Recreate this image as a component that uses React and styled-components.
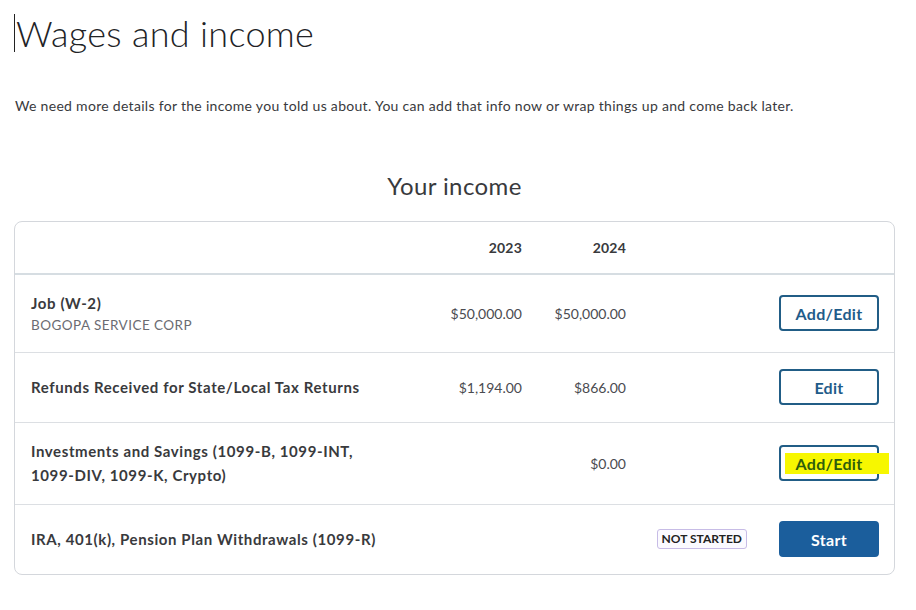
import React from 'react'
import styled, { createGlobalStyle } from 'styled-components'

const GlobalStyle = createGlobalStyle`
  html, body {
    margin: 0;
    padding: 0;
    background: #fff;
  }
  body {
    font-family: Lato, "Noto Sans", "Liberation Sans", sans-serif;
    color: #393a3d;
  }
`

const rows = [
  { title: 'Job (W-2)', sub: 'BOGOPA SERVICE CORP', y2023: '$50,000.00', y2024: '$50,000.00', action: 'Add/Edit' },
  { title: 'Refunds Received for State/Local Tax Returns', y2023: '$1,194.00', y2024: '$866.00', action: 'Edit' },
  {
    title: 'Investments and Savings (1099-B, 1099-INT, 1099-DIV, 1099-K, Crypto)',
    y2024: '$0.00',
    action: 'Add/Edit',
    highlight: true,
  },
  { title: 'IRA, 401(k), Pension Plan Withdrawals (1099-R)', status: 'NOT STARTED', action: 'Start', primary: true },
]

// keep form codes like "1099-DIV" on one line
function Words({ text }) {
  const words = text.split(' ')
  return words.map((w, i) => (
    <React.Fragment key={i}>
      <Word>{w}</Word>
      {i < words.length - 1 ? ' ' : null}
    </React.Fragment>
  ))
}

export default function App() {
  return (
    <Page>
      <GlobalStyle />
      <Title>Wages and income</Title>
      <Intro>
        We need more details for the income you told us about. You can add that info now or wrap things up and come
        back later.
      </Intro>
      <SectionTitle>Your income</SectionTitle>
      <Card>
        <HeaderRow>
          <span />
          <YearHead>2023</YearHead>
          <YearHead>2024</YearHead>
          <span />
          <span />
        </HeaderRow>
        {rows.map((row) => (
          <Row key={row.title}>
            <Label>
              <LabelTitle>
                <Words text={row.title} />
              </LabelTitle>
              {row.sub && <LabelSub>{row.sub}</LabelSub>}
            </Label>
            <Amount>{row.y2023}</Amount>
            <Amount>{row.y2024}</Amount>
            <Status>{row.status && <Badge>{row.status}</Badge>}</Status>
            <ActionButton $primary={row.primary}>
              {row.highlight ? <Marker>{row.action}</Marker> : row.action}
            </ActionButton>
          </Row>
        ))}
      </Card>
    </Page>
  )
}

const Page = styled.div`
  padding: 14px 21px 36px 14px;
`

const Title = styled.h1`
  margin: 0;
  padding-left: 1px;
  border-left: 1px solid #222;
  height: 38px;
  font-size: 36px;
  font-weight: 300;
  line-height: 38px;
  letter-spacing: 0.3px;
  color: #222326;
`

const Intro = styled.p`
  margin: 44px 0 0 1px;
  font-size: 14px;
  line-height: 20px;
  letter-spacing: 0.3px;
  color: #393a3d;
`

const SectionTitle = styled.h2`
  margin: 56px 0 0;
  text-align: center;
  font-size: 24px;
  font-weight: 400;
  line-height: 28px;
  letter-spacing: 0.4px;
  color: #393a3d;
`

const Card = styled.div`
  margin-top: 21px;
  border: 1px solid #d4d7dc;
  border-radius: 8px;
  overflow: hidden;
`

const grid = `
  display: grid;
  grid-template-columns: 1fr 120px 104px 121px 32px 100px;
  align-items: center;
  padding: 0 15px 0 16px;
`

const HeaderRow = styled.div`
  ${grid}
  height: 51px;
  border-bottom: 2px solid #d6dde2;
`

const YearHead = styled.span`
  text-align: right;
  font-size: 14px;
  font-weight: 700;
  letter-spacing: 0.2px;
  color: #393a3d;
`

const Row = styled.div`
  ${grid}
  padding-top: 16px;
  padding-bottom: 17px;
  border-bottom: 1px solid #dcdfe3;
  &:last-child {
    border-bottom: none;
  }
`

const Label = styled.div`
  min-width: 0;
`

const LabelTitle = styled.div`
  font-size: 15px;
  font-weight: 700;
  line-height: 24px;
  letter-spacing: 0.6px;
  color: #393a3d;
`

const Word = styled.span`
  white-space: nowrap;
`

const LabelSub = styled.div`
  font-size: 13.5px;
  line-height: 20px;
  letter-spacing: 0.45px;
  color: #6b6c72;
`

const Amount = styled.span`
  text-align: right;
  font-size: 14px;
  color: #4a4b50;
`

const Status = styled.div`
  display: flex;
  justify-content: flex-end;
`

const Badge = styled.span`
  border: 1px solid #c7bce6;
  background: #fbfaff;
  border-radius: 3px;
  padding: 1px 4px;
  font-size: 12px;
  font-weight: 700;
  line-height: 16px;
  color: #222;
`

const ActionButton = styled.button`
  grid-column: 6;
  height: 36px;
  width: 100px;
  box-sizing: border-box;
  border: 2px solid ${(p) => (p.$primary ? '#1b5e9c' : '#215d86')};
  border-radius: 4px;
  background: ${(p) => (p.$primary ? '#1b5e9c' : '#fff')};
  color: ${(p) => (p.$primary ? '#fff' : '#1f5c8a')};
  font-family: inherit;
  font-size: 16px;
  font-weight: 700;
  letter-spacing: 0.3px;
  cursor: pointer;
  padding: 0;
`

const Marker = styled.span`
  position: relative;
  z-index: 0;
  color: #2e5e0c;
  &::before {
    content: '';
    position: absolute;
    left: -11px;
    right: -27px;
    top: -1px;
    bottom: -1px;
    background: #f7f700;
    z-index: -1;
  }
`
